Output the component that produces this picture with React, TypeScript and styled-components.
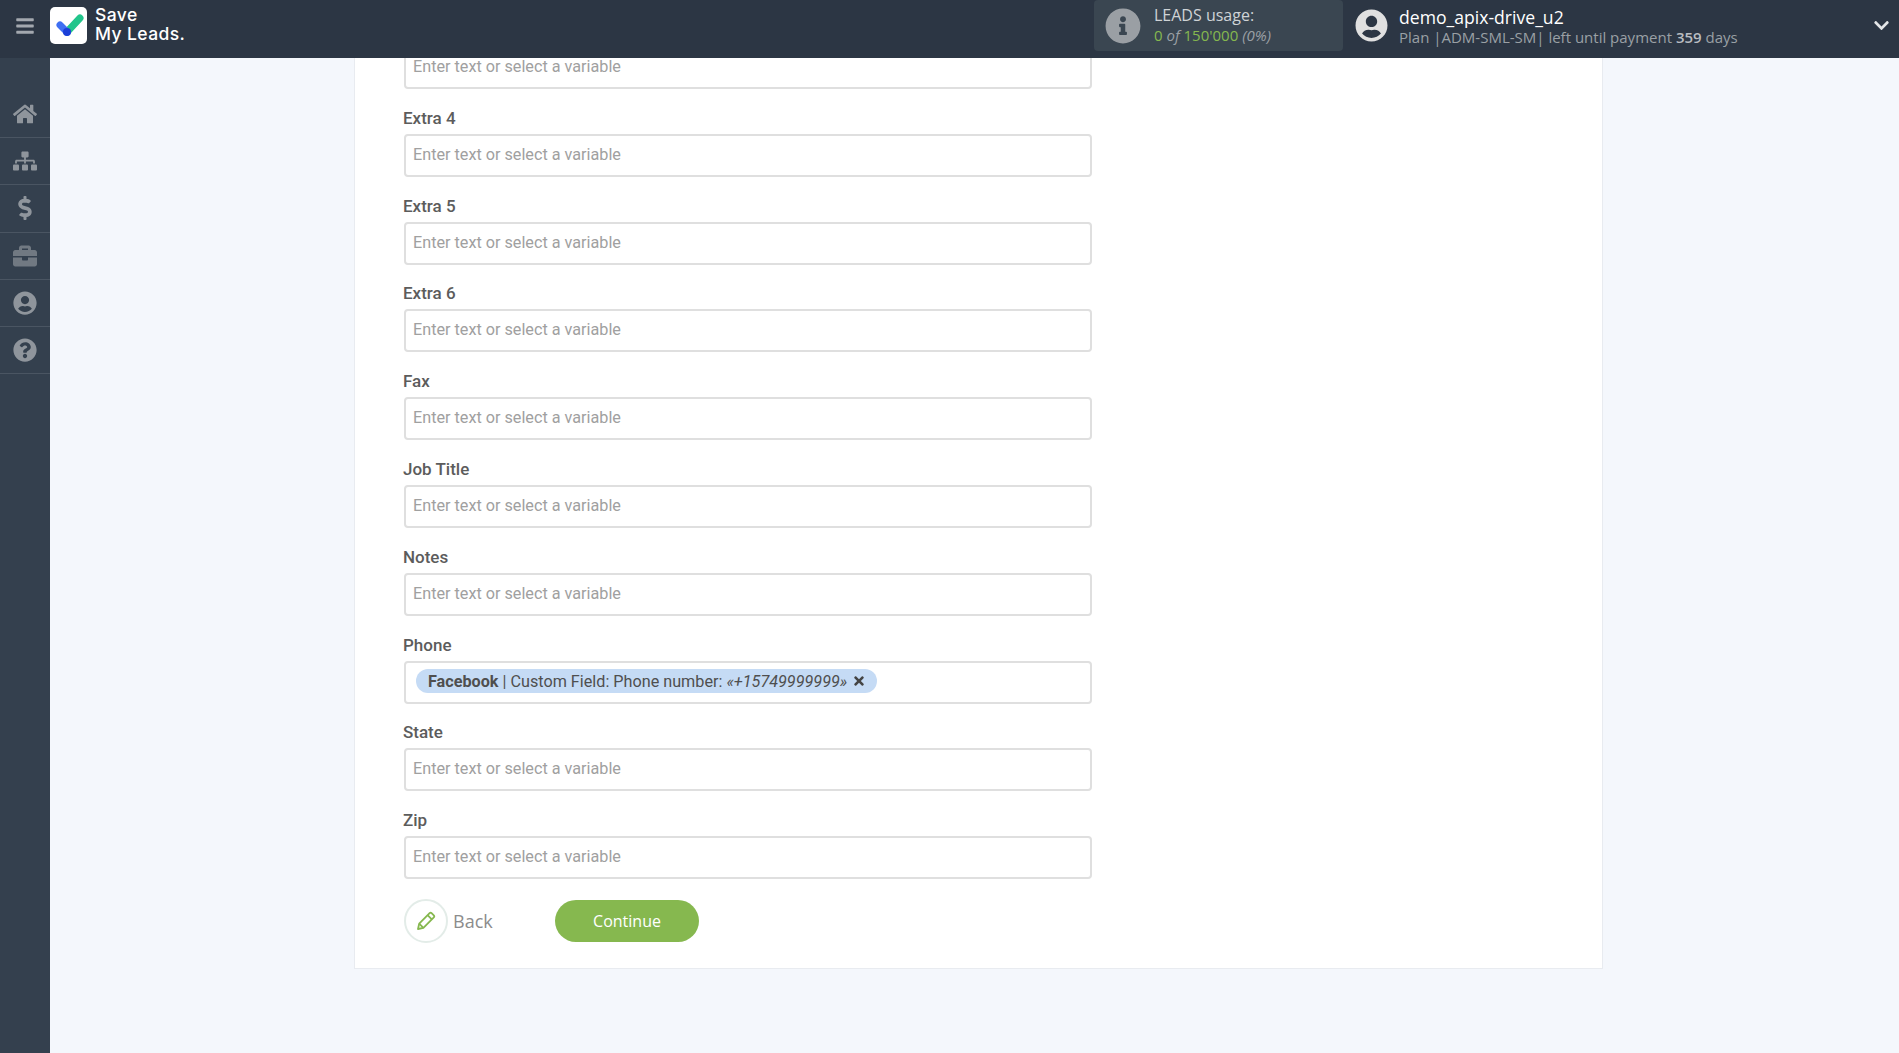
import { createGlobalStyle, styled } from 'styled-components';
import {
  FaBars,
  FaBriefcase,
  FaChevronDown,
  FaDollarSign,
  FaHome,
  FaInfoCircle,
  FaQuestionCircle,
  FaSitemap,
  FaTimes,
  FaUserCircle,
} from 'react-icons/fa';

const GlobalStyle = createGlobalStyle`
  html, body {
    margin: 0;
    height: 100%;
    overflow: hidden;
    background: #f4f7fc;
  }
  * { box-sizing: border-box; }
`;

const fields = ['Extra 4', 'Extra 5', 'Extra 6', 'Fax', 'Job Title', 'Notes'];
const PLACEHOLDER = 'Enter text or select a variable';

const menu = [FaHome, FaSitemap, FaDollarSign, FaBriefcase, FaUserCircle, FaQuestionCircle];

const App = () => {
  return (
    <Page>
      <GlobalStyle />
      <Header>
        <Burger><FaBars /></Burger>
        <LogoBox>
          <svg width="37" height="37" viewBox="0 0 37 37">
            <rect width="37" height="37" rx="5" fill="#fff" />
            <path d="M17 25 L30 11" stroke="#22c58b" strokeWidth="7" strokeLinecap="round" />
            <path d="M10 18 L17 25" stroke="#3f6ff2" strokeWidth="7" strokeLinecap="round" />
            <circle cx="17" cy="25" r="4" fill="#1b3fd8" />
          </svg>
        </LogoBox>
        <LogoText>Save<br />My Leads.</LogoText>
        <Usage>
          <UsageIcon><FaInfoCircle /></UsageIcon>
          <UsageText>
            <UsageTitle>LEADS usage:</UsageTitle>
            <UsageValue><b>0</b> <i>of</i> <b>150'000</b> <i>(0%)</i></UsageValue>
          </UsageText>
        </Usage>
        <Account>
          <AccountIcon><FaUserCircle /></AccountIcon>
          <div>
            <AccountName>demo_apix-drive_u2</AccountName>
            <AccountPlan>Plan |ADM-SML-SM| left until payment <b>359</b> days</AccountPlan>
          </div>
        </Account>
        <Chevron><FaChevronDown /></Chevron>
      </Header>
      <Body>
        <Sidebar>
          {menu.map((Icon, i) => (
            <MenuItem key={i} $dim={i === 3}><Icon /></MenuItem>
          ))}
        </Sidebar>
        <Main>
          <Panel>
            <Form>
              <InputBox><Placeholder>{PLACEHOLDER}</Placeholder></InputBox>
              {fields.map((name) => (
                <Field key={name}>
                  <Label>{name}</Label>
                  <InputBox><Placeholder>{PLACEHOLDER}</Placeholder></InputBox>
                </Field>
              ))}
              <Field>
                <Label>Phone</Label>
                <InputBox>
                  <Tag>
                    <b>Facebook</b>&nbsp;| Custom Field: Phone number:&nbsp;<i>«+15749999999»</i>
                    <TagClose><FaTimes /></TagClose>
                  </Tag>
                </InputBox>
              </Field>
              {['State', 'Zip'].map((name) => (
                <Field key={name}>
                  <Label>{name}</Label>
                  <InputBox><Placeholder>{PLACEHOLDER}</Placeholder></InputBox>
                </Field>
              ))}
              <Actions>
                <BackButton>
                  <BackCircle>
                    <svg width="22" height="22" viewBox="0 0 22 22" fill="none" stroke="#86b84f" strokeWidth="1.8" strokeLinejoin="round">
                      <path d="M3 19 L4.2 13.6 L14.6 3.2 Q15.6 2.2 16.6 3.2 L18.8 5.4 Q19.8 6.4 18.8 7.4 L8.4 17.8 Z" />
                      <path d="M12.6 5.2 L16.8 9.4" />
                      <path d="M4.2 13.6 L8.4 17.8" />
                    </svg>
                  </BackCircle>
                  Back
                </BackButton>
                <ContinueButton>Continue</ContinueButton>
              </Actions>
            </Form>
          </Panel>
        </Main>
      </Body>
    </Page>
  );
};

export default App;

const Page = styled.div`
  display: flex;
  flex-direction: column;
  height: 100vh;
  overflow: hidden;
`;

const Header = styled.header`
  position: relative;
  z-index: 2;
  display: flex;
  align-items: center;
  flex: none;
  height: 58px;
  padding-bottom: 7px;
  background: #2c3644;
  color: #fff;
  font-family: "Open Sans", sans-serif;
`;

const Burger = styled.div`
  display: flex;
  justify-content: center;
  width: 50px;
  font-size: 20px;
  color: #a3a8af;
`;

const LogoBox = styled.div`
  display: flex;
`;

const LogoText = styled.div`
  margin-left: 8px;
  padding-bottom: 4px;
  font-family: Inter, sans-serif;
  font-size: 17.5px;
  font-weight: 500;
  line-height: 19px;
  letter-spacing: 0.4px;
`;

const Usage = styled.div`
  display: flex;
  align-items: center;
  width: 249px;
  height: 51px;
  margin-left: auto;
  padding-left: 11px;
  background: #3a4651;
  border-radius: 4px;
`;

const UsageIcon = styled.div`
  display: flex;
  font-size: 36px;
  color: #9a9fa4;
`;

const UsageText = styled.div`
  margin-left: 13px;
  padding-bottom: 2px;
`;

const UsageTitle = styled.div`
  font-size: 16px;
  line-height: 20px;
  color: #cfd3d6;
`;

const UsageValue = styled.div`
  font-size: 15px;
  line-height: 20px;
  color: #9aa0a5;
  b {
    font-weight: 400;
    color: #86b84f;
  }
`;

const Account = styled.div`
  display: flex;
  align-items: center;
  width: 518px;
  margin-left: 12px;
`;

const AccountIcon = styled.div`
  display: flex;
  font-size: 33px;
  color: #e0e0e0;
  margin-right: 11px;
`;

const AccountName = styled.div`
  font-size: 17.6px;
  line-height: 22px;
`;

const AccountPlan = styled.div`
  font-size: 15px;
  line-height: 18px;
  color: #9aa0a5;
  b {
    font-weight: 600;
    color: #b9bdc1;
  }
`;

const Chevron = styled.div`
  display: flex;
  flex: none;
  width: 17px;
  font-size: 17px;
  margin-right: 9px;
  color: #e4e6e8;
`;

const Body = styled.div`
  display: flex;
  flex: 1;
  min-height: 0;
`;

const Sidebar = styled.nav`
  flex: none;
  width: 50px;
  padding-top: 33px;
  background: #34404e;
`;

const MenuItem = styled.div<{ $dim?: boolean }>`
  display: flex;
  align-items: center;
  justify-content: center;
  height: 47.2px;
  padding-right: 1px;
  font-size: 24px;
  color: ${({ $dim }) => ($dim ? '#717982' : '#8f959c')};
  border-bottom: 1px solid #4a5562;
`;

const Main = styled.main`
  flex: 1;
  min-width: 0;
  padding-left: 304px;
`;

const Panel = styled.section`
  width: 1249px;
  margin-top: -12px;
  padding: 0 0 25px 49px;
  background: #fff;
  border: 1px solid #e8ebf0;
  border-top: 0;
`;

const Form = styled.div`
  display: flex;
  flex-direction: column;
  width: 688px;
`;

const Field = styled.div`
  margin-top: 18.8px;
`;

const Label = styled.div`
  height: 21px;
  margin-bottom: 5px;
  font-family: Roboto, sans-serif;
  font-size: 17px;
  font-weight: 500;
  line-height: 21px;
  color: #5c5c5c;
  transform: translateX(-1px);
`;

const InputBox = styled.div`
  display: flex;
  align-items: center;
  height: 43px;
  padding: 0 7px 2px;
  background: #fff;
  border: 2px solid #dfdfdf;
  border-radius: 4px;
  font-family: Roboto, sans-serif;
  font-size: 16.2px;
`;

const Placeholder = styled.span`
  color: #a0a0a0;
`;

const Tag = styled.span`
  display: inline-flex;
  align-items: center;
  height: 24px;
  margin-left: 3px;
  padding: 0 11px 0 12px;
  background: #c5dbf5;
  border-radius: 12px;
  color: #4f4f4f;
  white-space: nowrap;
  b { font-weight: 700; }
`;

const TagClose = styled.span`
  display: inline-flex;
  margin-left: 5px;
  font-size: 14px;
  color: #444;
`;

const Actions = styled.div`
  display: flex;
  align-items: center;
  margin-top: 20px;
`;

const BackButton = styled.div`
  display: flex;
  align-items: center;
  width: 151px;
  font-family: "Open Sans", sans-serif;
  font-size: 18px;
  color: #8c8c8c;
`;

const BackCircle = styled.div`
  display: flex;
  align-items: center;
  justify-content: center;
  width: 44px;
  height: 44px;
  margin-right: 5px;
  border: 2px solid #e3ece8;
  border-radius: 50%;
`;

const ContinueButton = styled.div`
  display: flex;
  align-items: center;
  justify-content: center;
  width: 144px;
  height: 42px;
  background: #86b84f;
  border-radius: 21px;
  font-family: "Open Sans", sans-serif;
  font-size: 16px;
  font-weight: 500;
  color: #fff;
`;
